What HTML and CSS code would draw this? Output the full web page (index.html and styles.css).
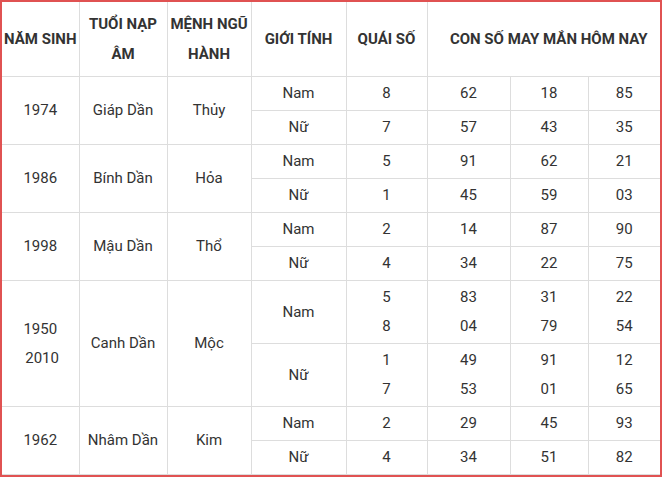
FILE: index.html
```html
<!DOCTYPE html>
<html lang="vi">
<head>
<meta charset="utf-8">
<title>Con số may mắn</title>
<link rel="stylesheet" href="styles.css">
</head>
<body>
<div class="frame">
<table class="lucky">
<colgroup>
<col class="c1"><col class="c2"><col class="c3"><col class="c4"><col class="c5"><col class="c6"><col class="c7"><col class="c8">
</colgroup>
<thead>
<tr>
<th class="first">NĂM SINH</th>
<th>TUỔI NẠP ÂM</th>
<th>MỆNH NGŨ HÀNH</th>
<th>GIỚI TÍNH</th>
<th>QUÁI SỐ</th>
<th colspan="3" class="last wide">CON SỐ MAY MẮN HÔM NAY</th>
</tr>
</thead>
<tbody>
<tr>
<td rowspan="2" class="first">1974</td><td rowspan="2">Giáp Dần</td><td rowspan="2">Thủy</td>
<td>Nam</td><td>8</td><td>62</td><td>18</td><td class="last">85</td>
</tr>
<tr><td>Nữ</td><td>7</td><td>57</td><td>43</td><td class="last">35</td></tr>
<tr>
<td rowspan="2" class="first">1986</td><td rowspan="2">Bính Dần</td><td rowspan="2">Hỏa</td>
<td>Nam</td><td>5</td><td>91</td><td>62</td><td class="last">21</td>
</tr>
<tr><td>Nữ</td><td>1</td><td>45</td><td>59</td><td class="last">03</td></tr>
<tr>
<td rowspan="2" class="first">1998</td><td rowspan="2">Mậu Dần</td><td rowspan="2">Thổ</td>
<td>Nam</td><td>2</td><td>14</td><td>87</td><td class="last">90</td>
</tr>
<tr><td>Nữ</td><td>4</td><td>34</td><td>22</td><td class="last">75</td></tr>
<tr>
<td rowspan="2" class="first">1950<br>&nbsp;2010</td><td rowspan="2">Canh Dần</td><td rowspan="2">Mộc</td>
<td>Nam</td><td>5<br>8</td><td>83<br>04</td><td>31<br>79</td><td class="last">22<br>54</td>
</tr>
<tr><td>Nữ</td><td>1<br>7</td><td>49<br>53</td><td>91<br>01</td><td class="last">12<br>65</td></tr>
<tr>
<td rowspan="2" class="first">1962</td><td rowspan="2">Nhâm Dần</td><td rowspan="2">Kim</td>
<td>Nam</td><td>2</td><td>29</td><td>45</td><td class="last">93</td>
</tr>
<tr><td>Nữ</td><td>4</td><td>34</td><td>51</td><td class="last">82</td></tr>
</tbody>
</table>
</div>
</body>
</html>
```

FILE: styles.css
```css
html, body {
  margin: 0;
  padding: 0;
  background: #ffffff;
}

.frame {
  width: 658px;
  height: 473px;
  border: 2px solid #e05252;
  overflow: hidden;
  font-family: Roboto, "Liberation Sans", sans-serif;
  color: #333333;
}

.lucky {
  width: 658px;
  table-layout: fixed;
  border-collapse: collapse;
  border: none;
}

.c1 { width: 77px; }
.c2 { width: 88px; }
.c3 { width: 84px; }
.c4 { width: 95px; }
.c5 { width: 81px; }
.c6 { width: 83px; }
.c7 { width: 78px; }
.c8 { width: 72px; }

.lucky th,
.lucky td {
  border: 1px solid #dddddd;
  text-align: center;
  vertical-align: middle;
  font-size: 15px;
}

.lucky th {
  border-top: none;
  font-weight: 700;
  line-height: 30px;
  padding: 7px 1px;
  color: #333333;
}

.lucky th.wide {
  padding-left: 11px;
}

.lucky td {
  font-weight: 400;
  line-height: 29px;
  padding: 2px 4px;
}

.lucky .first { border-left: none; }
.lucky .last { border-right: none; }
```
